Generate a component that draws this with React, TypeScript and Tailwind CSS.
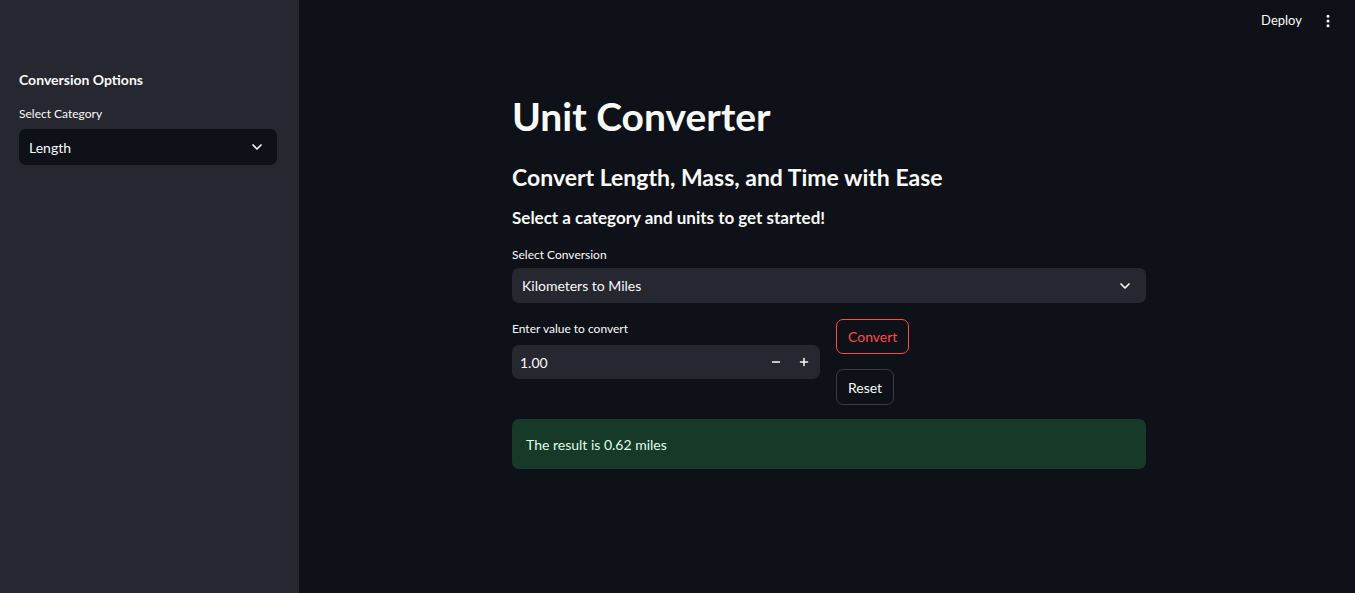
import { ChevronDown, EllipsisVertical, Minus, Plus } from 'lucide-react';

export default function App() {
  const font = { fontFamily: 'Lato, "Noto Sans", sans-serif' };

  return (
    <div className="flex w-full h-[593px] bg-[#0e1117] text-[#fafafa] overflow-hidden" style={font}>
      {/* sidebar */}
      <aside className="w-[299px] shrink-0 bg-[#262730] pl-[19px] pr-[22px] pt-[71px]">
        <h3 className="text-[14px] font-bold leading-[18px]">Conversion Options</h3>
        <label className="block mt-[17px] text-[12px] leading-[16px]">Select Category</label>
        <div className="mt-[7px] h-[36px] rounded-[7px] bg-[#0e1117] flex items-center justify-between pl-[10px] pr-[12px]">
          <span className="text-[14px]">Length</span>
          <ChevronDown size={16} strokeWidth={2.5} />
        </div>
      </aside>

      {/* main */}
      <main className="flex-1 flex flex-col">
        <header className="h-[42px] flex items-center justify-end gap-[18px] pr-[19px]">
          <span className="text-[13px]">Deploy</span>
          <EllipsisVertical size={16} strokeWidth={2.5} />
        </header>

        <div className="w-[634px] ml-[213px] mt-[50px]">
          <h1 className="text-[39px] font-bold leading-[48px]">Unit Converter</h1>
          <h2 className="mt-[22px] text-[23px] font-bold leading-[30px]">
            Convert Length, Mass, and Time with Ease
          </h2>
          <h3 className="mt-[15px] text-[17px] font-bold leading-[22px]">
            Select a category and units to get started!
          </h3>

          <label className="block mt-[18px] text-[12px] leading-[16px]">Select Conversion</label>
          <div className="mt-[5px] h-[35px] rounded-[7px] bg-[#262730] flex items-center justify-between pl-[10px] pr-[13px]">
            <span className="text-[14px]">Kilometers to Miles</span>
            <ChevronDown size={16} strokeWidth={2.5} />
          </div>

          <div className="mt-[16px] flex gap-[16px]">
            <div className="w-[308px] pt-[2px]">
              <label className="block text-[12px] leading-[16px]">Enter value to convert</label>
              <div className="mt-[8px] h-[34px] rounded-[7px] bg-[#262730] flex items-center justify-between pl-[8px] pr-[6px]">
                <span className="text-[14px]">1.00</span>
                <div className="flex items-center gap-[16px] pr-[4px]">
                  <Minus size={12} strokeWidth={3} />
                  <Plus size={12} strokeWidth={3} />
                </div>
              </div>
            </div>
            <div className="flex flex-col items-start gap-[15px]">
              <button className="h-[35px] px-[11px] rounded-[7px] border border-[#ff4b4b] text-[#ff4b4b] text-[14px] bg-[#0e1117]">
                Convert
              </button>
              <button className="h-[36px] px-[11px] rounded-[7px] border border-[#3b3d45] text-[14px] bg-[#0e1117]">
                Reset
              </button>
            </div>
          </div>

          <div className="mt-[14px] h-[50px] rounded-[7px] bg-[#173928] flex items-center px-[14px]">
            <span className="text-[14px] text-[#dffde9]">The result is 0.62 miles</span>
          </div>
        </div>
      </main>
    </div>
  );
}
